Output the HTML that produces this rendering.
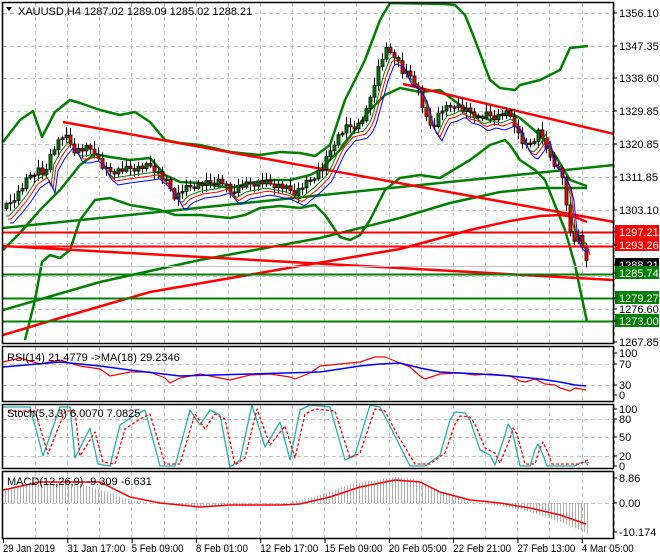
<!DOCTYPE html>
<html><head><meta charset="utf-8"><style>
html,body{margin:0;padding:0;background:#fff;}
svg{display:block;font-family:"Liberation Sans",sans-serif;}
</style></head><body>
<svg id="s" width="660" height="560" xmlns="http://www.w3.org/2000/svg">
<defs><clipPath id="cm"><rect x="3" y="3" width="610" height="340"/></clipPath></defs>
<rect width="660" height="560" fill="#fff"/>
<g id="grid" stroke="#c0c0c0" stroke-dasharray="4,3" stroke-width="1"></g>
<g id="main" clip-path="url(#cm)"></g>
<g id="sub"></g>
<g id="frame" fill="none" stroke="#000" stroke-width="1.5">
<rect x="2.5" y="2.5" width="611" height="341"/>
<rect x="2.5" y="346.5" width="611" height="55"/>
<rect x="2.5" y="404.5" width="611" height="64"/>
<rect x="2.5" y="471.5" width="611" height="67"/>
</g>
<g id="labels" font-size="11" fill="#000"></g>
<text x="18" y="15" font-size="11">XAUUSD,H4  1287.02 1289.09 1285.02 1288.21</text>
<polygon points="6,7 12,7 9,11" fill="#000"/>
<text x="7" y="361" font-size="11">RSI(14) 21.4779  -&gt;MA(18) 29.2346</text>
<text x="7" y="417" font-size="11">Stoch(5,3,3) 6.0070 7.0825</text>
<text x="7" y="485" font-size="11">MACD(12,26,9) -9.309 -6.631</text>
</svg>
<script>
(function(){
var NS="http://www.w3.org/2000/svg";
function el(p,t,a){var e=document.createElementNS(NS,t);for(var k in a)e.setAttribute(k,a[k]);document.getElementById(p).appendChild(e);return e;}
function pl(p,pts,c,w,d){var a={points:pts.map(function(q){return q[0]+","+q[1]}).join(" "),fill:"none",stroke:c,"stroke-width":w,"stroke-linejoin":"round"};if(d)a["stroke-dasharray"]=d;return el(p,"polyline",a);}
function interp(P,x){if(x<=P[0][0])return P[0][1];for(var i=1;i<P.length;i++){if(x<=P[i][0]){var t=(x-P[i-1][0])/(P[i][0]-P[i-1][0]);return P[i-1][1]+t*(P[i][1]-P[i-1][1]);}}return P[P.length-1][1];}
function sample(P,x0,x1,st){var r=[];for(var x=x0;x<=x1;x+=st)r.push([x,interp(P,x)]);return r;}
var vx=[];for(var x=35;x<614;x+=32.15)vx.push(Math.round(x)+0.5);
vx.forEach(function(x){[[3,343],[347,401],[405,468],[472,538]].forEach(function(r){el("grid","line",{x1:x,y1:r[0],x2:x,y2:r[1]});});});
[13,46,78,111,144,177,210,243,276,309].forEach(function(y){el("grid","line",{x1:3,y1:y+.5,x2:613,y2:y+.5});});
[364,385,419,437,456,503].forEach(function(y){el("grid","line",{x1:3,y1:y+.5,x2:613,y2:y+.5});});
var G="#008000",R="#ff0000";
pl("main",[[3,142],[20,120],[33,111],[42,137],[55,112],[70,100],[80,103],[100,110],[120,115],[135,112],[150,122],[165,140],[180,143],[200,145],[230,152],[260,155],[280,152],[300,153],[315,156],[330,145],[345,100],[365,60],[380,20],[390,3],[445,4],[455,5],[465,15],[475,40],[490,80],[500,88],[515,90],[520,85],[540,80],[550,75],[560,70],[570,48],[588,46]],G,2.5);
pl("main",[[25,340],[35,300],[42,262],[50,255],[60,258],[70,250],[80,220],[95,200],[110,198],[130,205],[160,210],[175,215],[200,215],[230,218],[245,215],[260,208],[280,206],[300,208],[315,205],[325,215],[340,237],[350,240],[360,235],[370,220],[385,190],[400,178],[420,175],[440,178],[470,160],[490,145],[505,140],[510,145],[520,160],[535,170],[545,180],[555,205],[565,230],[575,265],[587,322]],G,2.5);
pl("main",[[3,250],[20,233],[40,210],[60,190],[80,165],[95,154],[110,157],[130,160],[150,158],[165,175],[180,182],[200,183],[230,188],[250,183],[270,180],[290,180],[310,175],[320,170],[340,150],[355,130],[370,110],[385,95],[400,88],[420,92],[440,90],[460,105],[475,115],[490,120],[500,115],[510,113],[520,118],[540,135],[555,155],[570,180],[587,186]],G,2.5);
pl("main",[[3,228],[614,165]],G,2.5);
pl("main",[[3,310],[100,282],[200,260],[320,238],[400,218],[450,203],[500,192],[540,188],[587,188]],G,2.5);
pl("main",[[3,335],[60,318],[150,292],[300,266],[400,249],[470,230],[510,221],[540,216],[560,215],[575,217],[587,222]],R,2.5);
pl("main",[[63,122],[614,222]],R,2.5);
pl("main",[[403,84],[614,134]],R,2.5);
pl("main",[[3,246],[614,280]],R,2.5);
el("main","line",{x1:3,y1:232.5,x2:613,y2:232.5,stroke:R,"stroke-width":2});
el("main","line",{x1:3,y1:246.5,x2:613,y2:246.5,stroke:R,"stroke-width":2});
el("main","line",{x1:3,y1:266.5,x2:613,y2:266.5,stroke:"#c0c0c0","stroke-width":1});
[274.5,298.5,321.5].forEach(function(y){el("main","line",{x1:3,y1:y,x2:613,y2:y,stroke:G,"stroke-width":2});});
var C=[[3,210],[12,200],[20,190],[30,175],[40,168],[45,180],[48,158],[55,145],[63,135],[68,140],[73,150],[80,150],[88,148],[95,152],[100,165],[108,172],[120,170],[135,168],[150,166],[160,175],[168,185],[175,198],[182,190],[195,185],[210,183],[220,180],[230,192],[240,186],[260,182],[280,186],[295,193],[300,188],[310,180],[322,168],[335,140],[345,128],[358,125],[365,115],[372,90],[378,68],[385,50],[395,55],[402,72],[410,76],[418,90],[425,118],[432,128],[440,110],[448,108],[455,104],[462,110],[470,112],[478,118],[486,115],[495,117],[505,113],[512,118],[520,140],[527,147],[533,140],[540,128],[545,150],[550,157],[557,168],[563,178],[568,228],[575,240],[580,235],[585,262],[588,266]];
var N=Math.floor((588-6)/4);var prev=interp(C,4);
for(var i=0;i<=N;i++){var x=6+i*4;var c=interp(C,x)+((i*7)%5-2)*1.5;var o=prev;prev=c;
var tp=Math.min(o,c),bt=Math.max(o,c);if(bt-tp<1.5)bt=tp+1.5;
var hi=tp-2-((i*13)%7);var lo=bt+2+((i*11)%6);
el("main","line",{x1:x+.5,y1:hi,x2:x+.5,y2:lo,stroke:"#000","stroke-width":1});
el("main","rect",{x:x-1,y:tp,width:3,height:bt-tp,fill:(c<o?G:R),stroke:"#000","stroke-width":0.8});
}
pl("main",sample(C.map(function(q){return [q[0]+6,q[1]+6]}),6,590,3),G,1);
pl("main",sample(C.map(function(q){return [q[0]+8,q[1]+9]}),8,590,3),R,1);
pl("main",sample(C.map(function(q){return [q[0]+10,q[1]+13]}),10,590,3),"#0000ff",1);
pl("sub",[[3,362],[20,358],[40,364],[60,360],[80,366],[100,369],[110,376],[130,372],[150,372],[165,378],[170,383],[180,378],[200,374],[210,376],[230,380],[250,375],[270,374],[290,377],[295,379],[310,373],[320,366],[330,365],[360,362],[375,357],[385,357],[400,363],[410,367],[420,376],[425,379],[440,374],[460,373],[475,375],[490,374],[510,376],[520,381],[525,382],[535,379],[545,384],[555,385],[560,388],[570,391],[575,388],[586,390]],R,1.2);
pl("sub",[[3,367],[60,362],[100,366],[130,370],[180,376],[250,374],[320,372],[360,366],[380,364],[400,363],[420,368],[440,372],[480,374],[510,376],[540,379],[560,382],[575,385],[586,386]],"#0000ff",1.5);
var ST=[[3,407],[30,407],[43,456],[60,407],[70,407],[75,458],[90,428],[98,464],[110,466],[120,425],[135,415],[145,410],[160,466],[175,466],[190,410],[200,425],[210,410],[220,415],[230,467],[240,460],[252,405],[265,447],[280,422],[290,460],[300,410],[310,405],[330,407],[345,460],[355,455],[370,405],[380,407],[392,430],[410,466],[425,466],[440,455],[450,420],[455,412],[465,413],[470,420],[480,450],[490,455],[495,465],[505,435],[508,424],[512,430],[520,466],[530,466],[535,450],[538,444],[543,455],[547,466],[575,466],[580,463],[585,462],[588,465]];
pl("sub",ST,"#20b2aa",1.3);
pl("sub",ST.map(function(q){return [Math.min(q[0]+5,588),q[1]+(q[1]<436?4:-2)]}),R,1.3,"3,2");
var SIG=[[3,490],[40,482],[100,482],[130,497],[160,503],[200,507],[230,505],[280,505],[300,504],[330,497],[360,487],[395,480],[420,482],[440,492],[470,500],[500,503],[530,508],[560,515],[586,524]];
var M=[[3,490],[30,484],[80,484],[100,490],[130,500],[160,504],[200,507],[280,505],[320,495],[350,484],[395,477],[415,479],[440,492],[470,502],[500,506],[530,512],[560,522],[586,533]];
for(var x=5;x<=587;x+=3){var y=interp(M,x);el("sub","line",{x1:x+.5,y1:503,x2:x+.5,y2:y,stroke:"#b0b0b0","stroke-width":1});}
pl("sub",SIG,R,1.5);
function lab(t,y,bg,fg){if(bg)el("labels","rect",{x:615,y:y-7,width:44,height:13,fill:bg});var e=el("labels","text",{x:619,y:y+4,fill:fg||"#000"});e.textContent=t;el("labels","line",{x1:613,y1:y,x2:617,y2:y,stroke:"#000"});}
[["1356.10",13],["1347.35",46],["1338.60",78],["1329.85",111],["1320.85",144],["1311.85",177],["1303.10",210],["1276.60",309],["1267.85",342]].forEach(function(a){lab(a[0],a[1]);});
lab("1297.21",232,R,"#fff");lab("1293.26",245,R,"#fff");lab("1288.21",265,"#000","#fff");lab("1285.74",273,G,"#fff");lab("1279.27",298,G,"#fff");lab("1273.00",321,G,"#fff");
[["100",353],["70",364],["30",385],["0",395],["100",409],["80",419],["50",437],["20",456],["0",466],["8.86",478],["0.00",503],["-10.174",532]].forEach(function(a){lab(a[0],a[1]);});
var dl=["29 Jan 2019","31 Jan 17:00","5 Feb 09:00","8 Feb 01:00","12 Feb 17:00","15 Feb 09:00","20 Feb 05:00","22 Feb 21:00","27 Feb 13:00","4 Mar 05:00"];
dl.forEach(function(t,i){var x=3+i*64.3;var e=el("labels","text",{x:x,y:552,textLength:(t.length>11?58:52),lengthAdjust:"spacingAndGlyphs"});e.textContent=t;el("labels","line",{x1:x+.5,y1:539,x2:x+.5,y2:543,stroke:"#000"});});
})();
</script>
</body></html>
